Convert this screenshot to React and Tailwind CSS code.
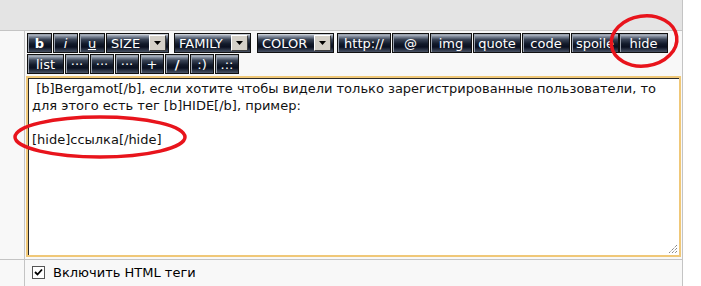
const BTN_BG =
  "bg-[linear-gradient(to_bottom,#d8dce2_0%,#8a94a4_12%,#3a4456_30%,#121a2a_55%,#0a1020_72%,#4a5466_100%)]";

function Btn({ w, label, bold, italic, underline, ml = "ml-px" }) {
  return (
    <div
      className={`${ml} ${w} h-[20px] border border-[#111] ${BTN_BG} flex items-center justify-center overflow-hidden whitespace-nowrap text-white text-[13px] leading-none shadow-[inset_1px_1px_0_#9aa2ae]`}
    >
      <span
        className={`${bold ? "font-bold" : ""} ${italic ? "italic" : ""} ${
          underline ? "underline" : ""
        }`}
      >
        {label}
      </span>
    </div>
  );
}

function Select({ w, label, ml }) {
  return (
    <div
      className={`${ml} ${w} h-[20px] border border-[#111] ${BTN_BG} flex items-center pl-[4px] pr-[2px] text-white text-[13px] leading-none`}
    >
      <span className="flex-1">{label}</span>
      <div className="w-[17px] h-[16px] bg-[#d4d0c8] border-t border-l border-t-white border-l-white border-b border-r border-b-[#404040] border-r-[#404040] flex items-center justify-center">
        <svg width="8" height="5" viewBox="0 0 8 5">
          <path d="M0 0h7L3.5 4z" fill="#000" />
        </svg>
      </div>
    </div>
  );
}

export default function App() {
  return (
    <div className="relative w-[701px] h-[286px] bg-white overflow-hidden font-['DejaVu_Sans',Verdana,sans-serif] text-[13px] text-black">
      <div className="w-[683px] h-full border-r border-[#c4c4c4] flex flex-col">
        {/* header band */}
        <div className="h-[31px] bg-[#e4e4e4] border-b border-[#c4c4c4]" />

        <div className="flex bg-[#f8f8f8]">
          <div className="w-[25px] border-r border-[#c4c4c4]" />
          <div className="flex-1 pl-[1px] pt-[2px] pb-[2px]">
            {/* toolbar row 1 */}
            <div className="flex">
              <Btn w="w-[25px]" label="b" bold ml="ml-[1px]" />
              <Btn w="w-[25px]" label="i" italic />
              <Btn w="w-[26px]" label="u" underline />
              <Select w="w-[63px]" label="SIZE" ml="ml-[1px]" />
              <Select w="w-[77px]" label="FAMILY" ml="ml-[5px]" />
              <Select w="w-[77px]" label="COLOR" ml="ml-[6px]" />
              <Btn w="w-[54px]" label="http://" ml="ml-[3px]" />
              <Btn w="w-[37px]" label="@" ml="ml-[1px]" />
              <Btn w="w-[42px]" label="img" ml="ml-[1px]" />
              <Btn w="w-[48px]" label="quote" ml="ml-[1px]" />
              <Btn w="w-[48px]" label="code" ml="ml-[1px]" />
              <Btn w="w-[48px]" label="spoile" ml="ml-[1px]" />
              <Btn w="w-[49px]" label="hide" ml="ml-0" />
            </div>
            {/* toolbar row 2 */}
            <div className="flex mt-px">
              <Btn w="w-[37px]" label="list" ml="ml-[1px]" />
              <Btn w="w-[24px]" label="···" />
              <Btn w="w-[24px]" label="···" />
              <Btn w="w-[24px]" label="···" />
              <Btn w="w-[24px]" label="+" />
              <Btn w="w-[24px]" label="/" bold />
              <Btn w="w-[24px]" label=":)" />
              <Btn w="w-[24px]" label=".::" />
            </div>
            {/* text area */}
            <div className="relative mt-[2px] w-[655px] h-[181px] bg-white border-2 border-[#f0c878]">
              <div className="h-full border-t border-l border-[#2a2a2a] pl-[3px] pt-[1px] leading-[17px] text-[13px] text-[#111] whitespace-pre">
                {" [b]Bergamot[/b], если хотите чтобы видели только зарегистрированные пользователи, то\nдля этого есть тег [b]HIDE[/b], пример:\n\n[hide]ссылка[/hide]"}
              </div>
              <svg
                className="absolute right-[1px] bottom-[1px]"
                width="11"
                height="11"
                viewBox="0 0 11 11"
              >
                <path
                  d="M10 2L2 10M10 5L5 10M10 8L8 10"
                  stroke="#555"
                  strokeWidth="1"
                  strokeDasharray="1 1"
                />
              </svg>
            </div>
          </div>
        </div>

        {/* bottom row */}
        <div className="flex flex-1 bg-[#f8f8f8] border-t border-[#c4c4c4]">
          <div className="w-[25px] border-r border-[#c4c4c4]" />
          <div className="flex items-center pl-[7px] pt-[1px] h-[24px]">
            <div className="w-[13px] h-[13px] border border-[#555] bg-white flex items-center justify-center">
              <svg width="9" height="9" viewBox="0 0 9 9">
                <path d="M1 4l2.5 2.5L8 1.5" stroke="#000" strokeWidth="1.8" fill="none" />
              </svg>
            </div>
            <span className="ml-[8px] text-[13px]">Включить HTML теги</span>
          </div>
        </div>
      </div>

      {/* red annotation marks */}
      <svg className="absolute inset-0 pointer-events-none" width="701" height="286">
        <ellipse
          cx="644"
          cy="41"
          rx="33"
          ry="25"
          fill="none"
          stroke="#e8141c"
          strokeWidth="3.5"
          transform="rotate(-8 644 41)"
        />
        <ellipse
          cx="100"
          cy="137"
          rx="85"
          ry="20"
          fill="none"
          stroke="#e8141c"
          strokeWidth="3.5"
        />
      </svg>
    </div>
  );
}
